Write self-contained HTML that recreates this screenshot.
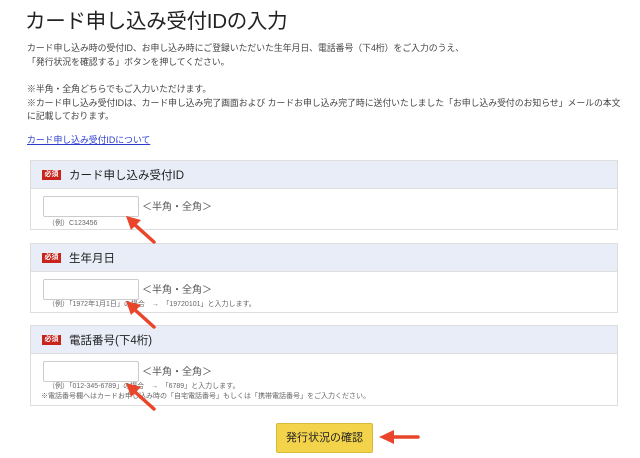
<!DOCTYPE html>
<html><head><meta charset="utf-8"><style>
body{margin:0;width:640px;height:458px;background:#fff;font-family:"Liberation Sans","Noto Sans CJK JP",sans-serif;color:#333;position:relative;overflow:hidden}
.a{position:absolute;white-space:nowrap}
h1{position:absolute;left:25px;top:4px;margin:0;font-weight:normal;font-size:20.5px;color:#222;letter-spacing:-0.3px}
.p{font-size:8.9px;color:#444;line-height:13.7px;letter-spacing:-0.05px}
.box{position:absolute;left:30px;width:586px;border:1px solid #ddd;background:#fff}
.hd{background:#e8edf8;border-bottom:1px solid #ddd;height:27px;position:relative}
.hd span.t{position:absolute;left:38px;top:6px;font-size:11.5px;color:#222}
.req{position:absolute;left:11px;top:9px;width:19px;height:10px;background:#c8241c;color:#fff;font-size:7px;line-height:10px;text-align:center;font-weight:bold}
.in{position:absolute;left:12px;top:7px;width:94px;height:19px;border:1px solid #ccc;border-radius:2px;background:#fff}
.lb{position:absolute;left:111px;top:9px;font-size:10px;color:#555}
.ex{position:absolute;left:17px;font-size:7px;color:#666;white-space:nowrap}
.btn{position:absolute;left:276px;top:423px;width:95px;height:28px;background:#f3d34a;border:1px solid #d8b93a;border-radius:2px;font-size:11px;text-align:center;line-height:28px;color:#222}
</style></head><body>
<h1>カード申し込み受付IDの入力</h1>
<div class="a p" style="left:27px;top:42px">カード申し込み時の受付ID、お申し込み時にご登録いただいた生年月日、電話番号（下4桁）をご入力のうえ、<br>「発行状況を確認する」ボタンを押してください。</div>
<div class="a p" style="left:27px;top:83px">※半角・全角どちらでもご入力いただけます。<br>※カード申し込み受付IDは、カード申し込み完了画面および カードお申し込み完了時に送付いたしました「お申し込み受付のお知らせ」メールの本文<br>に記載しております。</div>
<div class="a p" style="left:27px;top:134px;color:#2a3ccf;text-decoration:underline">カード申し込み受付IDについて</div>

<div class="box" style="top:160px;height:68px"><div class="hd"><div class="req">必須</div><span class="t">カード申し込み受付ID</span></div>
<div style="position:relative"><div class="in"></div><div class="lb">＜半角・全角＞</div><div class="ex" style="top:29px">（例）C123456</div></div></div>

<div class="box" style="top:243px;height:68px"><div class="hd"><div class="req">必須</div><span class="t">生年月日</span></div>
<div style="position:relative"><div class="in"></div><div class="lb">＜半角・全角＞</div><div class="ex" style="top:27px">（例）「1972年1月1日」の場合　→　「19720101」と入力します。</div></div></div>

<div class="box" style="top:325px;height:79px"><div class="hd"><div class="req">必須</div><span class="t">電話番号(下4桁)</span></div>
<div style="position:relative"><div class="in"></div><div class="lb">＜半角・全角＞</div><div class="ex" style="top:27px">（例）「012-345-6789」の場合　→　「6789」と入力します。</div><div class="ex" style="top:37px;left:10px">※電話番号欄へはカードお申し込み時の「自宅電話番号」もしくは「携帯電話番号」をご入力ください。</div></div></div>

<div class="btn">発行状況の確認</div>
<svg class="a" style="left:0;top:0" width="640" height="458">
<g stroke="#e8452a" stroke-width="3.5" fill="#e8452a" stroke-linecap="round">
<line x1="154" y1="242" x2="134" y2="224"/><polygon points="126,216 141,220 131,230" stroke="none"/>
<line x1="154" y1="327" x2="134" y2="309"/><polygon points="126,301 141,305 131,315" stroke="none"/>
<line x1="154" y1="409" x2="134" y2="391"/><polygon points="126,383 141,387 131,397" stroke="none"/>
<line x1="418" y1="437" x2="390" y2="437"/><polygon points="379,437 394,430 394,444" stroke="none"/>
</g></svg>
</body></html>
